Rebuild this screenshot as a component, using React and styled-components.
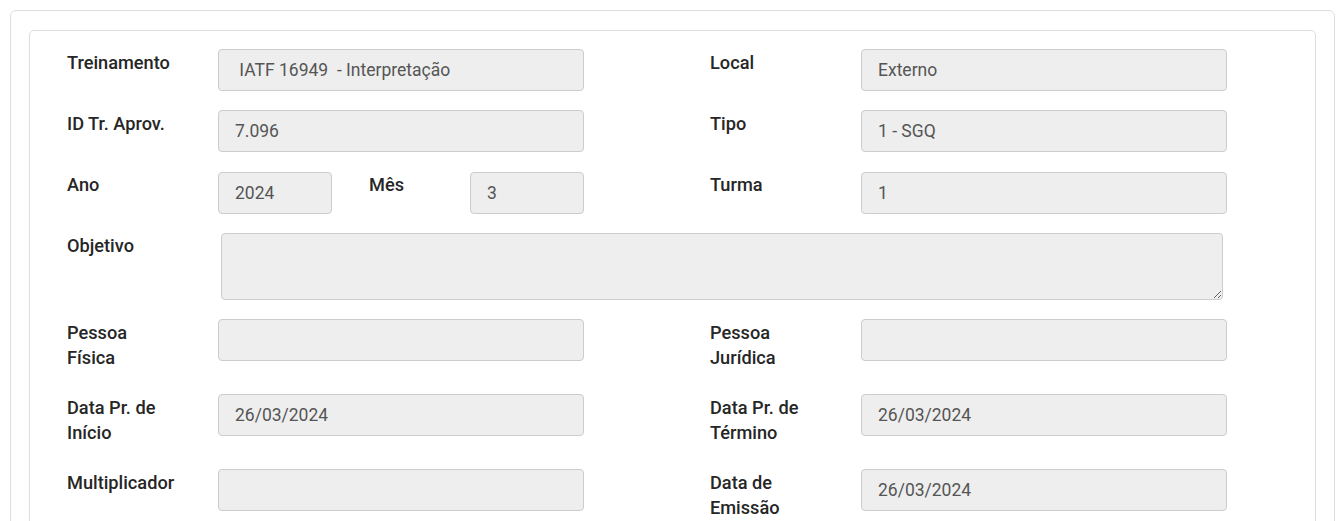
import React from "react";
import styled, { createGlobalStyle } from "styled-components";

const Global = createGlobalStyle`
  html, body { margin: 0; padding: 0; background: #fff; }
  body { font-family: Roboto, "Noto Sans", Arial, sans-serif; }
  * { box-sizing: border-box; }
`;

const Outer = styled.div`
  margin: 10px 0 0 10px;
  width: 1325px;
  min-height: 560px;
  border: 1px solid #dedede;
  border-radius: 6px;
  padding: 19px 18px 0 18px;
`;

const Card = styled.div`
  border: 1px solid #dedede;
  border-radius: 5px;
  padding: 18px 37px 20px 37px;
  min-height: 560px;
`;

const Row = styled.div`
  display: flex;
  gap: 126px;
  margin-bottom: 19.3px;
`;

const Field = styled.div`
  display: flex;
  align-items: flex-start;
  width: ${(p) => p.$w || 517}px;
  flex-shrink: 0;
`;

const Label = styled.label`
  display: block;
  width: ${(p) => p.$w || 151}px;
  flex-shrink: 0;
  margin: ${(p) => (p.$ml ? `0 0 5.2px ${p.$ml}px` : "0 0 5.2px 0")};
  padding-top: 0.5px;
  font-size: 18.2px;
  font-weight: 500;
  line-height: 25px;
  color: #262626;
`;

const Input = styled.input`
  width: ${(p) => p.$w || 366}px;
  height: 42px;
  flex-shrink: 0;
  padding: 0 16px;
  background: #eeeeee;
  border: 1px solid #cccccc;
  border-radius: 4px;
  font-family: Roboto, Arial, sans-serif;
  font-size: 17.5px;
  color: #555555;
  outline: none;
`;

const TextArea = styled.textarea`
  width: 1002px;
  height: 67px;
  margin-left: 3px;
  padding: 8px 16px;
  background: #eeeeee;
  border: 1px solid #cccccc;
  border-radius: 4px;
  font-family: Roboto, Arial, sans-serif;
  font-size: 17.5px;
  color: #555555;
  resize: vertical;
  outline: none;
`;

function F({ label, value, lw, iw }) {
  return (
    <>
      <Label $w={lw}>{label}</Label>
      <Input readOnly value={value} $w={iw} />
    </>
  );
}

export default function App() {
  return (
    <>
      <Global />
      <Outer>
        <Card>
          <Row>
            <Field><F label="Treinamento" value=" IATF 16949  - Interpretação" /></Field>
            <Field><F label="Local" value="Externo" /></Field>
          </Row>
          <Row>
            <Field><F label="ID Tr. Aprov." value="7.096" /></Field>
            <Field><F label="Tipo" value="1 - SGQ" /></Field>
          </Row>
          <Row>
            <Field>
              <Label>Ano</Label>
              <Input readOnly value="2024" $w={114} />
              <Label $w={101} $ml={37}>Mês</Label>
              <Input readOnly value="3" $w={114} />
            </Field>
            <Field><F label="Turma" value="1" /></Field>
          </Row>
          <Row>
            <Field $w={1160}>
              <Label>Objetivo</Label>
              <TextArea readOnly value="" />
            </Field>
          </Row>
          <Row>
            <Field><F label={<>Pessoa<br />Física</>} value="" /></Field>
            <Field><F label={<>Pessoa<br />Jurídica</>} value="" /></Field>
          </Row>
          <Row>
            <Field><F label={<>Data Pr. de<br />Início</>} value="26/03/2024" /></Field>
            <Field><F label={<>Data Pr. de<br />Término</>} value="26/03/2024" /></Field>
          </Row>
          <Row>
            <Field><F label="Multiplicador" value="" /></Field>
            <Field><F label={<>Data de<br />Emissão</>} value="26/03/2024" /></Field>
          </Row>
        </Card>
      </Outer>
    </>
  );
}
